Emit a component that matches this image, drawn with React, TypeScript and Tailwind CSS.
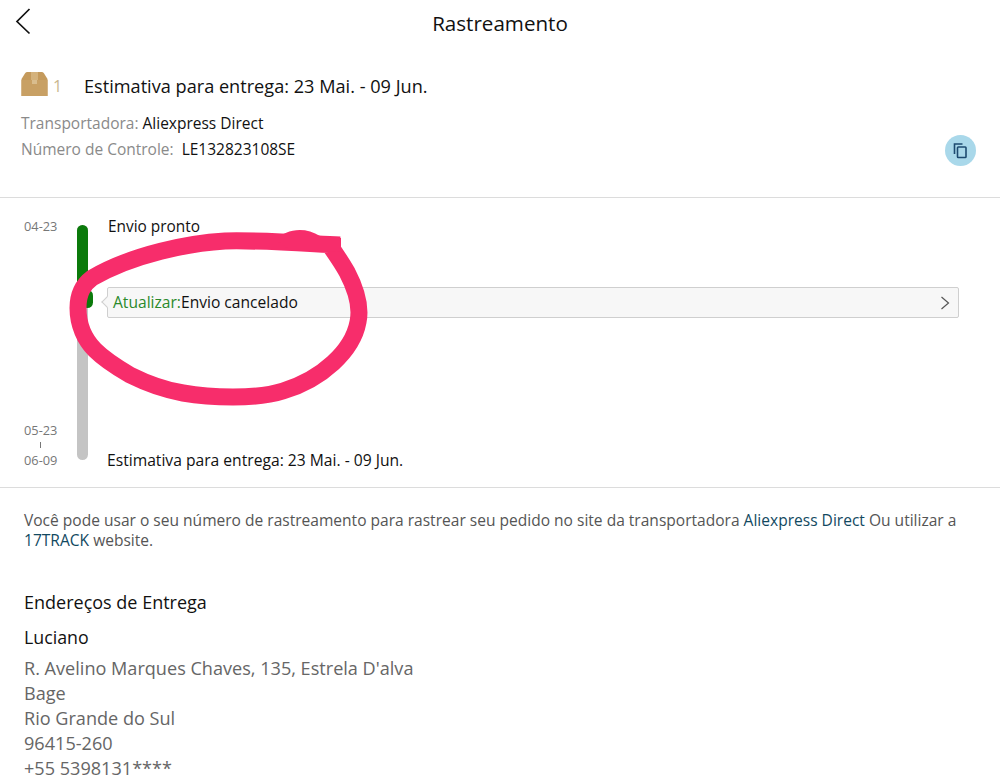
import React from "react";

function Box() {
  return (
    <svg width="27" height="24" viewBox="0 0 27 24" className="block -mt-[6px]">
      <path d="M6 0H21C22 0 23 1 24 3L26.500 7V24H0.500V7L3 3C4 1 5 0 6 0Z" fill="#c49a5c" />
      <path d="M0.500 8H26.500V24H0.500Z" fill="#c8a064" />
      <path d="M10 0H17V8H10Z" fill="#d4b27c" />
      <path d="M11 8H16V12H11Z" fill="#d9bd8e" />
    </svg>
  );
}

function Copy() {
  return (
    <svg width="16" height="16" viewBox="0 0 16 16" fill="none" stroke="#1d4a70" strokeWidth="1.600">
      <path d="M1.500 11V1H9.500" />
      <rect x="4.500" y="4" width="8.500" height="10.500" rx="0.800" />
    </svg>
  );
}

export default function App() {
  return (
    <div className="relative w-[1000px] h-[778px] overflow-hidden bg-white text-[#111] font-['Open_Sans','Liberation_Sans',sans-serif]">
      <header className="relative h-[45px] flex items-center justify-center">
        <svg width="18" height="28" viewBox="0 0 18 28" fill="none" stroke="#111" strokeWidth="1.700" className="absolute left-[14px] top-[7px]">
          <path d="M15.500 2L3 14.500L15.500 26.500" />
        </svg>
        <h1 className="text-[20.600px] leading-[28px] font-normal">Rastreamento</h1>
      </header>

      <section className="relative h-[153px] border-b border-[#dcdcdc] pl-[21px] pt-[27px]">
        <div className="flex items-center h-[30px]">
          <Box />
          <span className="ml-[5px] w-[31px] text-[16px] text-[#c9b78f] -mt-[2px]">1</span>
          <span className="text-[18.150px]">Estimativa para entrega: 23 Mai. - 09 Jun.</span>
        </div>
        <p className="mt-[8px] text-[15.500px] leading-[26px] text-[#8a8a8a]">
          Transportadora: <span className="text-[#111]">Aliexpress Direct</span>
        </p>
        <p className="text-[15.500px] leading-[26px] text-[#8a8a8a]">
          Número de Controle:&nbsp; <span className="text-[#111]">LE132823108SE</span>
        </p>
        <div className="absolute left-[945px] top-[90px] w-[31px] h-[31px] rounded-full bg-[#a9d8ea] flex items-center justify-center">
          <Copy />
        </div>
      </section>

      <section className="relative h-[290px] border-b border-[#dcdcdc]">
        <div className="absolute left-[77px] top-[27px] w-[11px] h-[235px] rounded-full bg-[#c4c4c4]" />
        <div className="absolute left-[77px] top-[27px] w-[11px] h-[75px] rounded-full bg-[#0b7a0b]" />
        <div className="absolute left-[82px] top-[92px] w-[11px] h-[18px] rounded-full bg-[#0b7a0b]" />
        <div className="pt-[18px] pl-[24px] flex">
          <span className="w-[84px] text-[12.800px] leading-[20px] text-[#777]">04-23</span>
          <span className="text-[15.400px] leading-[22px]">Envio pronto</span>
        </div>
        <div className="ml-[107px] mr-[41px] mt-[49px] h-[31px] relative border border-[#cfcfcf] bg-[#f7f7f7] rounded-[2px] flex items-center justify-between pl-[5px] pr-[8px]">
          <span className="absolute left-[-5px] top-[10px] w-[8px] h-[8px] rotate-45 bg-[#f7f7f7] border-l border-b border-[#cfcfcf]" />
          <span className="relative text-[15.600px]">
            <span className="text-[#2b8a2b]">Atualizar:</span>Envio cancelado
          </span>
          <svg width="10" height="14" viewBox="0 0 10 14" fill="none" stroke="#555" strokeWidth="1.200">
            <path d="M1.500 1L8.500 7L1.500 13" />
          </svg>
        </div>
        <div className="mt-[105px] pl-[24px] flex">
          <div className="w-[83px] flex flex-col text-[12.800px] leading-[14px] text-[#777]">
            <span>05-23</span>
            <span className="ml-[16px] mt-[5px] mb-[5px] block w-px h-[6px] bg-[#777]" />
            <span>06-09</span>
          </div>
          <span className="self-end text-[15.650px] leading-[14px]">Estimativa para entrega: 23 Mai. - 09 Jun.</span>
        </div>
      </section>

      <section className="pl-[24px] pr-[30px] pt-[22px]">
        <p className="text-[15.550px] leading-[20px] text-[#555]">
          Você pode usar o seu número de rastreamento para rastrear seu pedido no site da transportadora <span className="text-[#12495f]">Aliexpress Direct</span> Ou utilizar a <span className="text-[#12495f]">17TRACK</span> website.
        </p>
        <h2 className="mt-[40px] text-[18px] leading-[24px] font-normal">Endereços de Entrega</h2>
        <p className="mt-[11px] text-[17.800px] leading-[24px]">Luciano</p>
        <div className="mt-[7px] text-[18.100px] leading-[25px] text-[#666]">
          <p>R. Avelino Marques Chaves, 135, Estrela D'alva</p>
          <p>Bage</p>
          <p>Rio Grande do Sul</p>
          <p>96415-260</p>
          <p>+55 5398131****</p>
        </div>
      </section>

      <svg className="absolute left-0 top-0 pointer-events-none" width="1000" height="778" viewBox="0 0 1000 778" fill="none">
        <path
          d="M340 245C300 243 260 240 225 241C190 243 133 254 92 278C84 284 78 292 78 308C78 325 85 340 95 350C105 360 118 368 130 375C150 385 165 390 183 393C200 396 217 397 233 397C250 397 267 396 283 391C303 385 320 375 333 363C345 352 355 338 358 322C361 308 358 293 347 272C343 265 338 257 328 243"
          stroke="#f72d6b"
          strokeWidth="17"
          strokeLinecap="butt"
          strokeLinejoin="round"
        />
        <path d="M276 240C285 229 305 226 320 236L341 238V252L290 250Z" fill="#f72d6b" />
      </svg>
    </div>
  );
}
